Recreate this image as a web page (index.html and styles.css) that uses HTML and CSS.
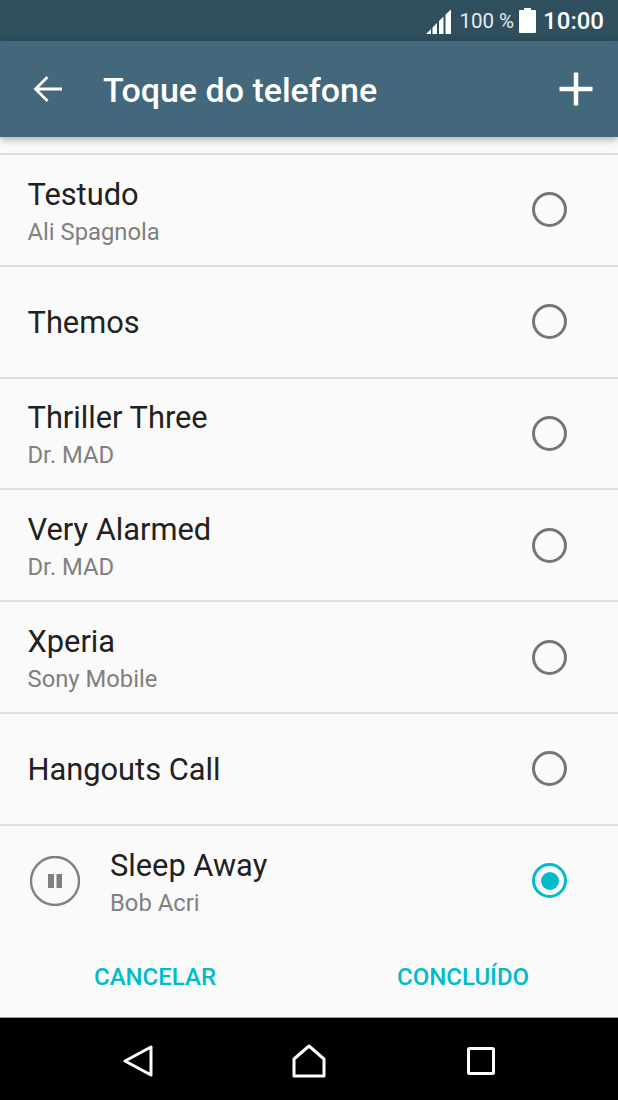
FILE: index.html
```html
<!DOCTYPE html>
<html lang="pt">
<head>
    <meta charset="UTF-8">
    <meta name="viewport" content="width=device-width, initial-scale=1.0">
    <link rel="stylesheet" href="styles.css">
    <title>Toque do telefone</title>
</head>
<body>
    <div class="statusbar">
        <svg class="signal" width="26" height="26" viewBox="0 0 26 26">
            <path d="M0 25 L5 20 V25 Z M6.500 25 V18.500 L11 14 V25 Z M13 25 V12 L17.500 7.500 V25 Z M19.500 25 V5.500 L25 0.500 V25 Z" fill="#fff"/>
        </svg>
        <span class="battext">100 %</span>
        <svg class="battery" width="17" height="25" viewBox="0 0 17 25">
            <path d="M5 0 H12 V2 H16 A1 1 0 0 1 17 3 V24 A1 1 0 0 1 16 25 H1 A1 1 0 0 1 0 24 V3 A1 1 0 0 1 1 2 H5 Z" fill="#fff"/>
        </svg>
        <span class="clock">10:00</span>
    </div>

    <header class="appbar">
        <svg class="back" width="29" height="28" viewBox="0 0 29 28">
            <path d="M29 14 H3 M14.500 2 L2.500 14 L14.500 26" fill="none" stroke="#fff" stroke-width="2.800"/>
        </svg>
        <h1>Toque do telefone</h1>
        <svg class="plus" width="34" height="34" viewBox="0 0 34 34">
            <path d="M17 0.500 V33.500 M0.500 17 H33.500" fill="none" stroke="#fff" stroke-width="4.500"/>
        </svg>
    </header>

    <main class="list">
        <div class="item">
            <div class="text"><p class="name">Testudo</p><p class="sub">Ali Spagnola</p></div>
            <span class="radio"></span>
        </div>
        <div class="item">
            <div class="text"><p class="name">Themos</p></div>
            <span class="radio"></span>
        </div>
        <div class="item">
            <div class="text"><p class="name">Thriller Three</p><p class="sub">Dr. MAD</p></div>
            <span class="radio"></span>
        </div>
        <div class="item">
            <div class="text"><p class="name">Very Alarmed</p><p class="sub">Dr. MAD</p></div>
            <span class="radio"></span>
        </div>
        <div class="item">
            <div class="text"><p class="name">Xperia</p><p class="sub">Sony Mobile</p></div>
            <span class="radio"></span>
        </div>
        <div class="item">
            <div class="text"><p class="name">Hangouts Call</p></div>
            <span class="radio"></span>
        </div>
        <div class="item playing">
            <svg class="pause" width="50" height="50" viewBox="0 0 50 50">
                <circle cx="25" cy="25" r="24" fill="none" stroke="#808080" stroke-width="2.400"/>
                <path d="M18 18 H24 V32 H18 Z M26.500 18 H32 V32 H26.500 Z" fill="#808080"/>
            </svg>
            <div class="text"><p class="name">Sleep Away</p><p class="sub">Bob Acri</p></div>
            <span class="radio on"></span>
        </div>
    </main>

    <div class="buttons">
        <div class="btn cancel">CANCELAR</div>
        <div class="btn done">CONCLUÍDO</div>
    </div>

    <nav class="navbar">
        <svg width="30" height="32" viewBox="0 0 30 32">
            <path d="M28 2 V30 L2 16 Z" fill="none" stroke="#fff" stroke-width="3" stroke-linejoin="round"/>
        </svg>
        <svg width="34" height="34" viewBox="0 0 34 34">
            <path d="M2 32 V15 L17 2 L32 15 V32 Z" fill="none" stroke="#fff" stroke-width="3" stroke-linejoin="round"/>
        </svg>
        <svg width="28" height="28" viewBox="0 0 28 28">
            <rect x="1.500" y="1.500" width="25" height="25" rx="1" fill="none" stroke="#fff" stroke-width="3"/>
        </svg>
    </nav>
</body>
</html>
```

FILE: styles.css
```css
* {
    box-sizing: border-box;
}
html, body {
    margin: 0;
    padding: 0;
}
body {
    width: 618px;
    height: 1100px;
    overflow: hidden;
    display: flex;
    flex-direction: column;
    background-color: #fafafa;
    font-family: Roboto, sans-serif;
}
.statusbar {
    height: 41px;
    flex-shrink: 0;
    display: flex;
    align-items: center;
    justify-content: flex-end;
    padding-right: 14px;
    background-color: #2f4f5e;
    color: #fff;
}
.signal {
    margin-right: 7px;
    margin-top: 2px;
}
.battext {
    font-size: 20.500px;
    margin-right: 5px;
    color: #e6ecef;
}
.battery {
    margin-right: 7px;
}
.clock {
    font-size: 24px;
    font-weight: 500;
}
.appbar {
    height: 96px;
    flex-shrink: 0;
    display: flex;
    align-items: center;
    padding: 0 25px 0 33px;
    background-color: #43677b;
    box-shadow: 0 2px 8px rgba(0, 0, 0, 0.35);
    position: relative;
}
.appbar h1 {
    flex: 1;
    margin: 2px 0 0 41px;
    font-size: 34px;
    font-weight: 500;
    color: #fff;
}
.list {
    padding-top: 16px;
    flex: 1;
}
.item {
    height: 111.800px;
    display: flex;
    align-items: center;
    padding: 0 51px 0 27.500px;
    border-top: 2px solid #e0e0e0;
}
.playing {
    padding-left: 30px;
}
.text {
    flex: 1;
    padding-top: 2px;
}
.name {
    margin: 0;
    font-size: 30.800px;
    line-height: 38px;
    color: #212121;
}
.sub {
    margin: 4px 0 0;
    font-size: 23.800px;
    line-height: 28px;
    color: #808080;
}
.radio {
    width: 35px;
    height: 35px;
    border: 3px solid #757575;
    border-radius: 50%;
}
.radio.on {
    border-color: #00bcc8;
    padding: 5.500px;
}
.radio.on::before {
    content: "";
    display: block;
    width: 18px;
    height: 18px;
    border-radius: 50%;
    background-color: #00bcc8;
}
.pause {
    margin-right: 30px;
}
.buttons {
    height: 81px;
    flex-shrink: 0;
    display: flex;
    align-items: center;
    border-bottom: 1px solid #9a9a9a;
}
.btn {
    font-size: 24px;
    font-weight: 500;
    color: #00bcc8;
}
.cancel {
    margin-left: 94px;
}
.done {
    margin-left: 181px;
}
.navbar {
    height: 82px;
    flex-shrink: 0;
    display: flex;
    align-items: center;
    background-color: #000;
    padding: 4px 0 0 123px;
    gap: 139px;
}
.navbar svg:last-child {
    margin-left: 2px;
}
```
